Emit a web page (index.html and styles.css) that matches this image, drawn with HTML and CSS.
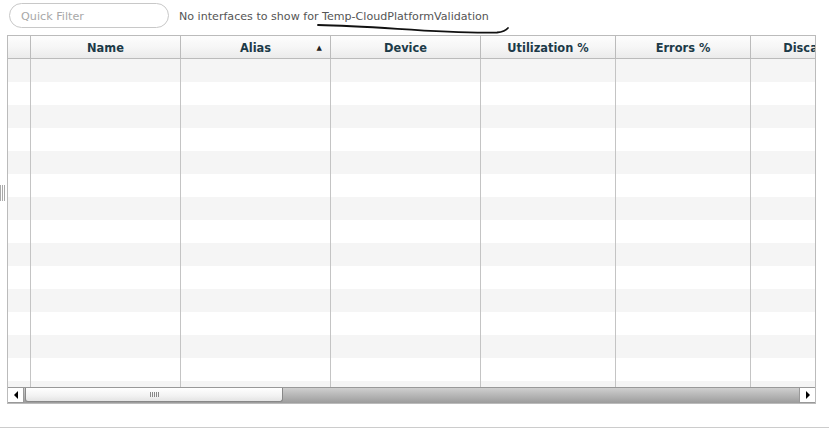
FILE: index.html
```html
<!DOCTYPE html>
<html>
<head>
<meta charset="utf-8">
<link rel="stylesheet" href="styles.css">
</head>
<body>
<div class="page">
  <div class="toolbar">
    <div class="filter">Quick Filter</div>
    <div class="message">No interfaces to show for Temp-CloudPlatformValidation</div>
  </div>
  <svg class="scribble" width="829" height="40" viewBox="0 0 829 40"><path d="M318,25 C380,26 440,34 497,32.5 C503,32 506,30.5 508,28" fill="none" stroke="#111" stroke-width="1.8" stroke-linecap="round"/></svg>
  <div class="grip"></div>
  <div class="grid">
    <div class="head">
      <div class="cell c0"></div>
      <div class="cell c1">Name</div>
      <div class="cell c1 sorted">Alias<span class="arrow">▲</span></div>
      <div class="cell c1">Device</div>
      <div class="cell c2">Utilization %</div>
      <div class="cell c2">Errors %</div>
      <div class="cell c3">Discards %</div>
    </div>
    <div class="body">
      <div class="row alt"><div class="cell c0"></div><div class="cell c1"></div><div class="cell c1"></div><div class="cell c1"></div><div class="cell c2"></div><div class="cell c2"></div><div class="cell c3"></div></div>
      <div class="row"><div class="cell c0"></div><div class="cell c1"></div><div class="cell c1"></div><div class="cell c1"></div><div class="cell c2"></div><div class="cell c2"></div><div class="cell c3"></div></div>
      <div class="row alt"><div class="cell c0"></div><div class="cell c1"></div><div class="cell c1"></div><div class="cell c1"></div><div class="cell c2"></div><div class="cell c2"></div><div class="cell c3"></div></div>
      <div class="row"><div class="cell c0"></div><div class="cell c1"></div><div class="cell c1"></div><div class="cell c1"></div><div class="cell c2"></div><div class="cell c2"></div><div class="cell c3"></div></div>
      <div class="row alt"><div class="cell c0"></div><div class="cell c1"></div><div class="cell c1"></div><div class="cell c1"></div><div class="cell c2"></div><div class="cell c2"></div><div class="cell c3"></div></div>
      <div class="row"><div class="cell c0"></div><div class="cell c1"></div><div class="cell c1"></div><div class="cell c1"></div><div class="cell c2"></div><div class="cell c2"></div><div class="cell c3"></div></div>
      <div class="row alt"><div class="cell c0"></div><div class="cell c1"></div><div class="cell c1"></div><div class="cell c1"></div><div class="cell c2"></div><div class="cell c2"></div><div class="cell c3"></div></div>
      <div class="row"><div class="cell c0"></div><div class="cell c1"></div><div class="cell c1"></div><div class="cell c1"></div><div class="cell c2"></div><div class="cell c2"></div><div class="cell c3"></div></div>
      <div class="row alt"><div class="cell c0"></div><div class="cell c1"></div><div class="cell c1"></div><div class="cell c1"></div><div class="cell c2"></div><div class="cell c2"></div><div class="cell c3"></div></div>
      <div class="row"><div class="cell c0"></div><div class="cell c1"></div><div class="cell c1"></div><div class="cell c1"></div><div class="cell c2"></div><div class="cell c2"></div><div class="cell c3"></div></div>
      <div class="row alt"><div class="cell c0"></div><div class="cell c1"></div><div class="cell c1"></div><div class="cell c1"></div><div class="cell c2"></div><div class="cell c2"></div><div class="cell c3"></div></div>
      <div class="row"><div class="cell c0"></div><div class="cell c1"></div><div class="cell c1"></div><div class="cell c1"></div><div class="cell c2"></div><div class="cell c2"></div><div class="cell c3"></div></div>
      <div class="row alt"><div class="cell c0"></div><div class="cell c1"></div><div class="cell c1"></div><div class="cell c1"></div><div class="cell c2"></div><div class="cell c2"></div><div class="cell c3"></div></div>
      <div class="row"><div class="cell c0"></div><div class="cell c1"></div><div class="cell c1"></div><div class="cell c1"></div><div class="cell c2"></div><div class="cell c2"></div><div class="cell c3"></div></div>
      <div class="row alt"><div class="cell c0"></div><div class="cell c1"></div><div class="cell c1"></div><div class="cell c1"></div><div class="cell c2"></div><div class="cell c2"></div><div class="cell c3"></div></div>
    </div>
    <div class="hscroll">
      <div class="btn left"><svg width="6" height="8" viewBox="0 0 6 8"><path d="M5,0 L5,8 L1,4 Z" fill="#000"/></svg></div>
      <div class="track">
        <div class="thumb"><span class="grips"></span></div>
      </div>
      <div class="btn right"><svg width="6" height="8" viewBox="0 0 6 8"><path d="M1,0 L1,8 L5,4 Z" fill="#000"/></svg></div>
    </div>
  </div>
  <div class="footer"></div>
</div>
</body>
</html>
```

FILE: styles.css
```css
* { box-sizing: border-box; }
html, body { margin: 0; padding: 0; background: #fff; }
body { width: 829px; height: 429px; overflow: hidden; font-family: "DejaVu Sans", Verdana, sans-serif; }
.page { position: relative; width: 829px; height: 429px; }
.toolbar { display: flex; align-items: center; padding: 3px 0 0 9px; height: 28px; }
.filter {
  width: 160px; height: 25px; border: 1px solid #c8c8c8; border-radius: 13px;
  padding: 1px 0 0 11px; font-size: 11.2px; color: #a8a8a8; line-height: 23px;
}
.message { margin-left: 10px; padding-top: 2px; font-size: 11.1px; color: #555; line-height: 23px; }
.scribble { position: absolute; left: 0; top: 0; pointer-events: none; }
.grip {
  position: absolute; left: 0; top: 185px; width: 5px; height: 16px;
  background: repeating-linear-gradient(to right, #aaa 0 1px, #fff 1px 2px);
}
.grid {
  margin: 7px 0 0 7px; width: 809px; height: 369px;
  border: 1px solid #bbb; overflow: hidden; display: flex; flex-direction: column;
}
.head {
  display: flex; height: 23px; flex: none;
  border-bottom: 1px solid #bbb;
  background: linear-gradient(to bottom, #fdfdfd 0%, #f6f6f6 50%, #ebebeb 100%);
}
.head .cell {
  font-weight: bold; font-size: 11.4px; color: #1c3a48; text-align: center; line-height: 22px;
  padding-top: 1px; position: relative;
}
.cell { flex: none; border-right: 1px solid #bbb; height: 100%; white-space: nowrap; overflow: hidden; }
.c0 { width: 23px; }
.c1 { width: 150px; }
.c2 { width: 135px; }
.c3 { width: 135px; border-right: none; }
.arrow { position: absolute; right: 8px; top: 1px; font-size: 7px; color: #222; }
.body { flex: 1; overflow: hidden; }
.row { display: flex; height: 23px; background: #fff; }
.row.alt { background: #f5f5f5; }
.row .cell { border-right-color: #c4c4c4; }
.hscroll { flex: none; height: 16px; display: flex; background: #fff; border-top: 1px solid #999; }
.btn {
  flex: none; width: 16px; height: 15px; display: flex; align-items: center; justify-content: center;
  background: #fff; border: 1px solid #999; border-top: none;
}
.btn.left { border-left: none; }
.btn.right { border-right: none; }
.track {
  flex: 1; height: 15px; padding-left: 1px;
  background: linear-gradient(to bottom, #cfcfcf 0%, #9c9c9c 100%);
}
.thumb {
  width: 258px; height: 14px; border: 1px solid #888; border-top: none; border-radius: 0 0 3px 3px;
  background: linear-gradient(to bottom, #ffffff 0%, #f2f2f2 60%, #e4e4e4 100%);
  display: flex; align-items: center; justify-content: center;
}
.grips { width: 9px; height: 5px; background: repeating-linear-gradient(to right, #888 0 1px, transparent 1px 2px); }
.footer { margin-top: 23px; height: 1px; background: #ccc; }
```
